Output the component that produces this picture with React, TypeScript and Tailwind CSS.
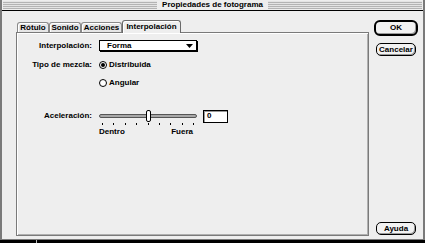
import React from "react";

const tabs = [
  { label: "Rótulo", w: "w-[32px]" },
  { label: "Sonido", w: "w-[32px]" },
  { label: "Acciones", w: "w-[41px]" },
];

const Radio = ({ checked, label }: { checked?: boolean; label: string }) => (
  <div className="flex items-center gap-[2px]">
    <div className="w-[8px] h-[8px] rounded-full border border-black bg-white flex items-center justify-center">
      {checked && <div className="w-[4px] h-[4px] rounded-full bg-black"></div>}
    </div>
    <span>{label}</span>
  </div>
);

const App = () => {
  return (
    <div className="w-[425px] h-[243px] overflow-hidden bg-black font-['Liberation_Sans',Arial,sans-serif] font-bold text-[8px] leading-none text-black">
      <div className="h-[240px] flex flex-col bg-[#eeeeee] border-l-2 border-r-2 border-b border-[#7a7a7a]">
        {/* title bar */}
        <div className="h-[11px] flex items-center px-[1px] border-b border-black bg-[#eeeeee]">
          <div className="flex-1 h-[8px] bg-[repeating-linear-gradient(to_bottom,#e4e4e4_0px,#e4e4e4_1px,#b4b4b4_1px,#b4b4b4_2px)]"></div>
          <span className="px-[5px]">Propiedades de fotograma</span>
          <div className="flex-1 h-[8px] bg-[repeating-linear-gradient(to_bottom,#e4e4e4_0px,#e4e4e4_1px,#b4b4b4_1px,#b4b4b4_2px)]"></div>
        </div>

        <div className="flex-1 flex pl-[14px] pt-[9px] pb-[3px]">
          {/* tabs + panel */}
          <div className="flex flex-col w-[353px]">
            <div className="flex items-end pl-[1px] h-[12px]">
              {tabs.map((t) => (
                <div
                  key={t.label}
                  className={`${t.w} h-[10px] flex items-center justify-center border border-b-0 border-[#8a8a8a] rounded-t-[3px] shadow-[inset_1px_1px_0_#ffffff] bg-[#e6e6e6]`}
                >
                  {t.label}
                </div>
              ))}
              <div className="w-[59px] h-[13px] -mb-px relative z-10 flex items-center justify-center border border-b-0 border-[#6a6a6a] rounded-t-[3px] shadow-[inset_1px_1px_0_#ffffff] bg-[#eeeeee] pb-[1px]">
                Interpolación
              </div>
            </div>
            <div className="flex-1 border border-[#7a7a7a] shadow-[inset_1px_1px_0_#ffffff,inset_-1px_-1px_0_#b0b0b0] flex flex-col">
              <div className="flex items-center h-[11px] mt-[7px]">
                <div className="w-[75px] text-right">Interpolación:</div>
                <div className="ml-[7px] w-[98px] h-[11px] border border-black bg-white shadow-[1px_1px_0_#000000] flex items-center pl-[7px] pr-[3px]">
                  <span className="flex-1">Forma</span>
                  <svg width="7" height="4" viewBox="0 0 7 4">
                    <polygon points="0,0 7,0 3.5,4" fill="#000" />
                  </svg>
                </div>
              </div>
              <div className="flex items-center h-[11px] mt-[8px]">
                <div className="w-[75px] text-right">Tipo de mezcla:</div>
                <div className="ml-[7px]">
                  <Radio checked label="Distribuida" />
                </div>
              </div>
              <div className="flex items-center h-[11px] mt-[7px]">
                <div className="w-[75px]"></div>
                <div className="ml-[7px]">
                  <Radio label="Angular" />
                </div>
              </div>
              <div className="flex items-center h-[12px] mt-[22px]">
                <div className="w-[75px] text-right">Aceleración:</div>
                <div className="ml-[7px] w-[98px] h-[12px] relative flex items-center">
                  <div className="w-full h-[4px] rounded-full border border-[#555555] bg-[#a8a8a8]"></div>
                  <div className="absolute left-[47px] top-0 w-[5px] h-[12px] rounded-[2px] border border-black bg-white"></div>
                </div>
                <div className="ml-[6px] w-[25px] h-[13px] border border-black bg-white shadow-[inset_1px_1px_0_#999999] flex items-center pl-[3px]">
                  0
                </div>
              </div>
              <div className="ml-[82px] w-[98px] px-[3px] mt-[1px] flex justify-between">
                {Array.from({ length: 9 }).map((_, i) => (
                  <div key={i} className="w-px h-[2px] bg-black"></div>
                ))}
              </div>
              <div className="ml-[82px] w-[98px] pr-[4px] mt-[3px] flex justify-between">
                <span>Dentro</span>
                <span>Fuera</span>
              </div>
            </div>
          </div>

          {/* buttons */}
          <div className="flex flex-col ml-[5px] w-[44px]">
            <div className="h-[16px] rounded-[6px] border-2 border-black bg-[#f2f2f2] shadow-[inset_-1px_-1px_0_#9a9a9a] flex items-center justify-center">
              OK
            </div>
            <div className="mt-[7px] mx-[2px] h-[13px] rounded-[5px] border border-black bg-[#f2f2f2] shadow-[inset_-1px_-1px_0_#9a9a9a] flex items-center justify-center">
              Cancelar
            </div>
            <div className="mt-auto mx-[2px] mb-[1px] h-[13px] rounded-[5px] border border-black bg-[#f2f2f2] shadow-[inset_-1px_-1px_0_#9a9a9a] flex items-center justify-center">
              Ayuda
            </div>
          </div>
        </div>
      </div>
      <div className="h-[3px] flex">
        <div className="w-[36px] bg-black"></div>
        <div className="w-px bg-[#bbbbbb]"></div>
        <div className="flex-1 bg-black"></div>
      </div>
    </div>
  );
};

export default App;
